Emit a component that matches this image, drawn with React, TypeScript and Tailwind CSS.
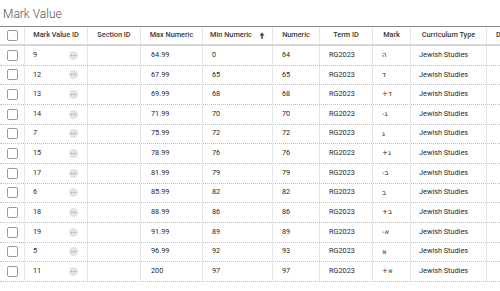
import React from "react";

const rows: [string, string, string, string, string][] = [
  ["9", "64.99", "0", "64", "ה"],
  ["12", "67.99", "65", "65", "ד"],
  ["13", "69.99", "68", "68", "+ד"],
  ["14", "71.99", "70", "70", "-ג"],
  ["7", "75.99", "72", "72", "ג"],
  ["15", "78.99", "76", "76", "+ג"],
  ["17", "81.99", "79", "79", "-ב"],
  ["6", "85.99", "82", "82", "ב"],
  ["18", "88.99", "86", "86", "+ב"],
  ["19", "91.99", "89", "89", "-א"],
  ["5", "96.99", "92", "93", "א"],
  ["11", "200", "97", "97", "+א"],
];

const grid =
  "grid grid-cols-[25px_63px_53px_62px_70px_47px_53px_38px_76px_90px]";

function Box() {
  return (
    <div className="flex w-full justify-center">
      <div className="h-[11px] w-[11px] rounded-[2px] border border-[#9a9a9a] bg-white" />
    </div>
  );
}

function Dots() {
  return (
    <div className="flex h-[9px] w-[9px] items-center justify-center rounded-full bg-[#e3e3e3]">
      <svg width="7" height="3" viewBox="0 0 7 3">
        <circle cx="1.5" cy="1.5" r="0.55" fill="#8f8f8f" />
        <circle cx="3.5" cy="1.5" r="0.55" fill="#8f8f8f" />
        <circle cx="5.5" cy="1.5" r="0.55" fill="#8f8f8f" />
      </svg>
    </div>
  );
}

export default function App() {
  const cell = "border-r border-[#e6e6e6] flex items-center";
  return (
    <div className="h-[291px] w-[500px] overflow-hidden bg-white font-['Roboto','Liberation_Sans','DejaVu_Sans',sans-serif] text-[#333]">
      <div className="h-[26px] pl-[3px] pt-[7px] text-[12px] font-light leading-[14px] text-[#555]">
        Mark Value
      </div>
      <div className="w-[600px]">
        <div
          className={`${grid} h-[20px] border-t border-b-2 border-t-[#8a8a8a] border-b-[#d6d6d6] text-[7.3px] font-medium text-[#3a3a3a]`}
        >
          <div className={cell}>
            <Box />
          </div>
          <div className={`${cell} justify-center`}>Mark Value ID</div>
          <div className={`${cell} justify-center`}>Section ID</div>
          <div className={`${cell} justify-center`}>Max Numeric</div>
          <div className={`${cell} justify-center gap-[7px]`}>
            <span>Min Numeric</span>
            <svg width="6" height="7" viewBox="0 0 6 7">
              <path d="M3 0.5 L5.6 3.4 H3.8 V6.8 H2.2 V3.4 H0.4 Z" fill="#444" />
            </svg>
          </div>
          <div className={`${cell} justify-center`}>Numeric</div>
          <div className={`${cell} justify-center`}>Term ID</div>
          <div className={`${cell} justify-center`}>Mark</div>
          <div className={`${cell} justify-center`}>Curriculum Type</div>
          <div className="flex items-center pl-[9px]">Description</div>
        </div>
        {rows.map((r, i) => (
          <div
            key={i}
            className={`${grid} h-[19.67px] border-b border-dotted border-b-[#bdbdbd] text-[7.3px] text-[#2a2a2a]`}
          >
            <div className={cell}>
              <Box />
            </div>
            <div className={`${cell} justify-between pl-[8px] pr-[9px]`}>
              <span>{r[0]}</span>
              <Dots />
            </div>
            <div className={cell}></div>
            <div className={`${cell} pl-[10px]`}>{r[1]}</div>
            <div className={`${cell} pl-[9px]`}>{r[2]}</div>
            <div className={`${cell} pl-[9px]`}>{r[3]}</div>
            <div className={`${cell} pl-[9px]`}>RG2023</div>
            <div className={`${cell} pl-[9px] font-['DejaVu_Sans',sans-serif] text-[7px]`}>
              {r[4]}
            </div>
            <div className={`${cell} pl-[8px]`}>Jewish Studies</div>
            <div className="flex items-center"></div>
          </div>
        ))}
      </div>
    </div>
  );
}
